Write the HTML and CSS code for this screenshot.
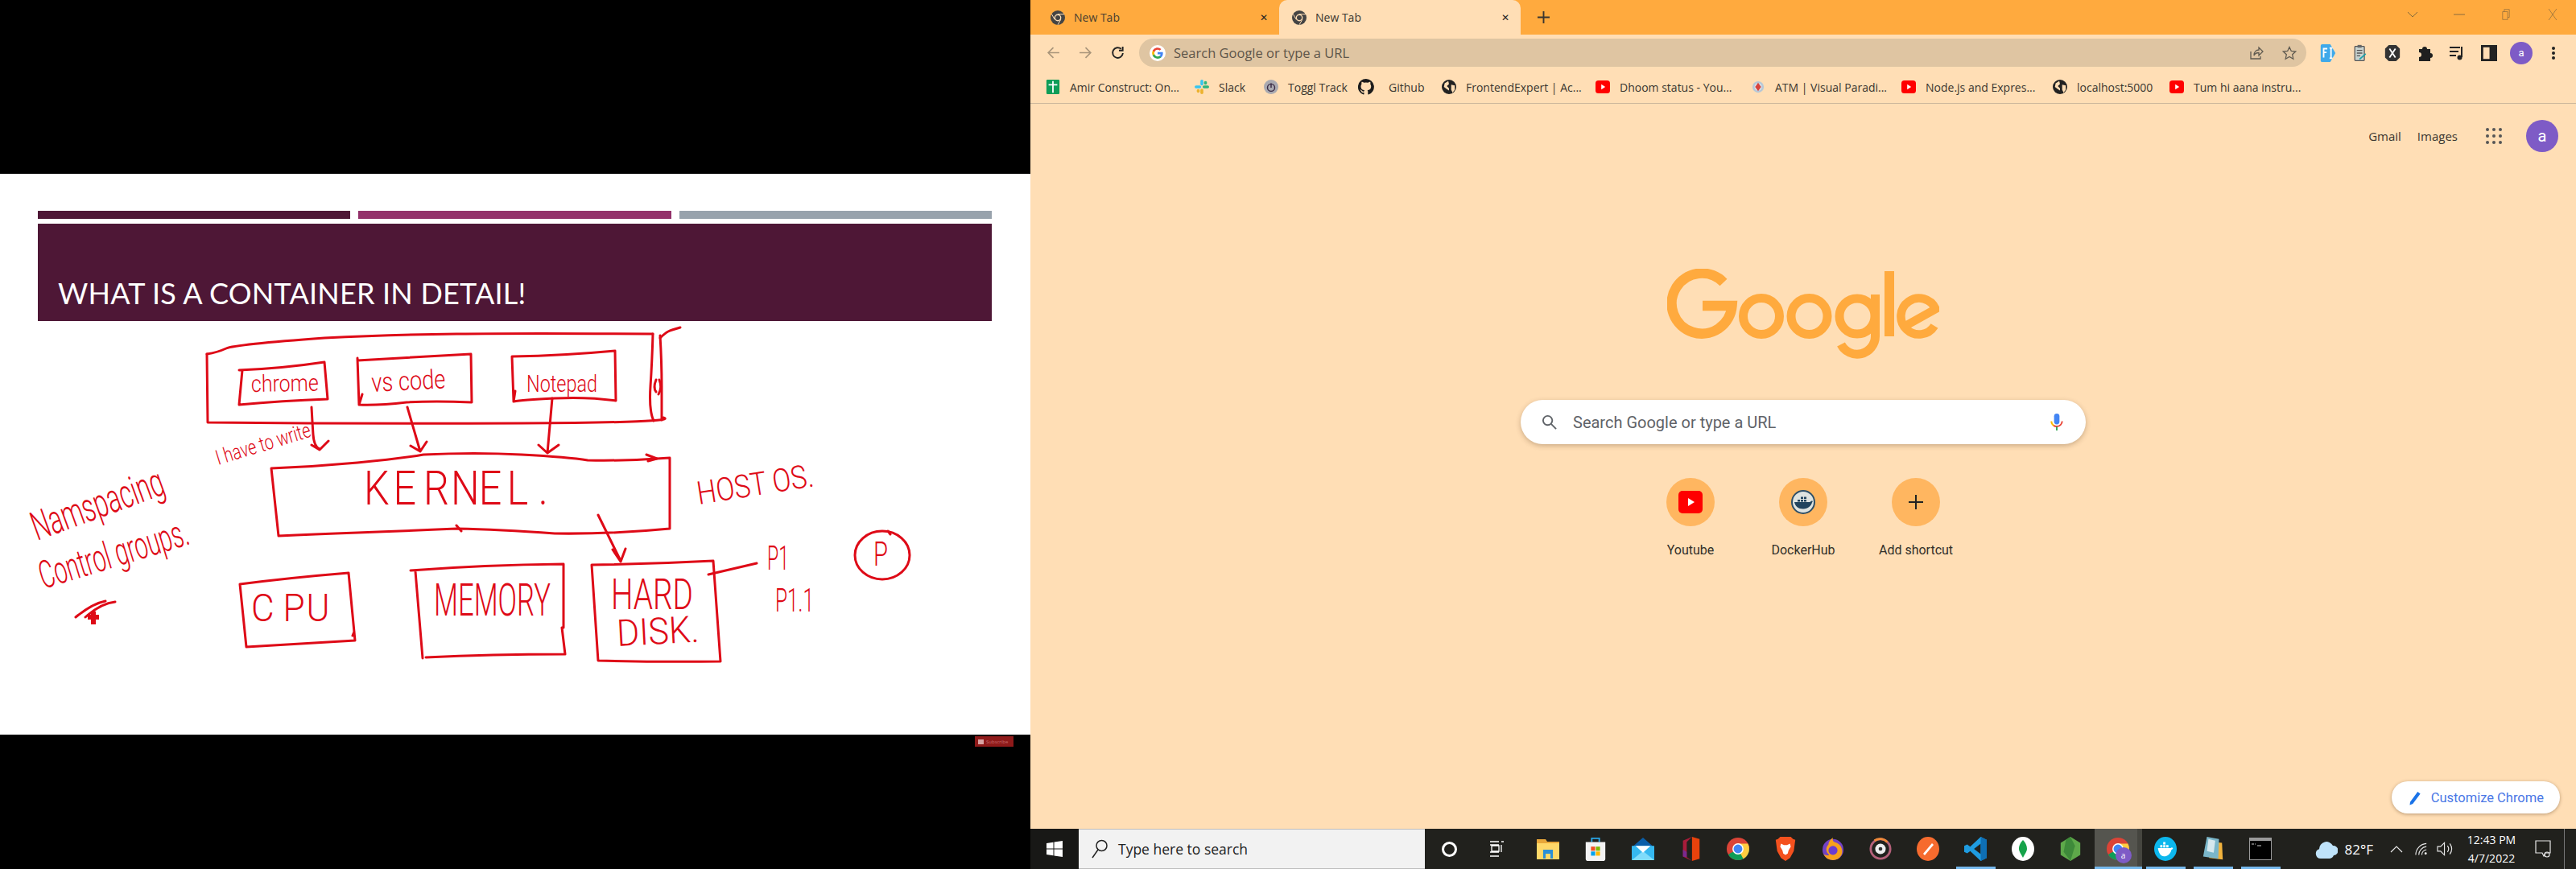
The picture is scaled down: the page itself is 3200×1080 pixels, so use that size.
FILE: index.html
```html
<!DOCTYPE html>
<html lang="en">
<head>
    <meta charset="UTF-8">
    <title>What is a container in detail - New Tab</title>
    <link rel="stylesheet" href="styles.css">
</head>
<body>
    <!-- shared icons -->
    <svg class="defs" width="0" height="0">
        <symbol id="chrome-mono" viewBox="0 0 18 18">
            <circle cx="9" cy="9" r="9" fill="#444"/>
            <circle cx="9" cy="9" r="4.4" fill="#ffdeb5"/>
            <circle cx="9" cy="9" r="3" fill="#444"/>
            <path d="M9 4.6h8M5.2 11.2 1.4 4.6M12.8 11.2 9 17.8" stroke="#ffdeb5" stroke-width="1"/>
        </symbol>
        <symbol id="yt" viewBox="0 0 20 20">
            <rect x="0" y="1" width="20" height="18" rx="4" fill="#f00"/>
            <path d="M8 6.5v7l5.5-3.5z" fill="#fff"/>
        </symbol>
        <symbol id="globe" viewBox="0 0 20 20">
            <circle cx="10" cy="10" r="10" fill="#222"/>
            <path d="M4 5l5-3 1 4-3 3 3 3v3l-3-2-4-3zM13 7l5 1 0 6-3 4-2-4z" fill="#ffdeb5"/>
        </symbol>
        <symbol id="chrome-color" viewBox="0 0 30 30">
            <circle cx="15" cy="15" r="15" fill="#db4437"/>
            <path d="M15 15 2 22.5A15 15 0 0 0 15 30z" fill="#0f9d58"/>
            <path d="M15 15h15A15 15 0 0 1 15 30z" fill="#0f9d58"/>
            <path d="M15 8h13.2A15 15 0 0 1 22 28L15 15z" fill="#ffcd40"/>
            <circle cx="15" cy="15" r="7.4" fill="#fff"/>
            <circle cx="15" cy="15" r="5.8" fill="#4285f4"/>
        </symbol>
    </svg>

    <div class="screen">
        <section class="video">
            <div class="slide">
                <div class="bars">
                    <span class="bar bar-dark"></span>
                    <span class="bar bar-pink"></span>
                    <span class="bar bar-grey"></span>
                </div>
                <h1 class="slide-title">WHAT IS A CONTAINER IN DETAIL!</h1>

                <!-- pen strokes drawn over the slide, coordinates are screen pixels -->
                <svg class="ink" viewBox="0 216 1280 697">
                    <g class="ink-lines">
                        <path d="M257 440Q270 438 281 433T403 420Q480 416 567 415T811 415"/>
                        <path d="M257 440 258 525Q450 527 648 526T824 519"/>
                        <path d="M811 415Q810 450 808 480T812 523"/>
                        <path d="M820 417Q822 450 822 480T822 522"/>
                        <path d="M820 420Q826 414 830 412T845 407"/>
                        <path d="M815 472Q811 482 815 487M819 472Q823 482 818 490"/>

                        <path d="M297 460Q350 458 403 450L407 496Q350 498 297 503M301 460 297 503"/>
                        <path d="M444 448Q510 444 585 440L586 500Q540 498 505 500 470 504 446 503L444 445M446 503 450 490"/>
                        <path d="M637 443Q700 442 764 436L765 498Q730 493 689 495T638 499L636 443M638 499 640 486"/>

                        <path d="M387 506Q388 525 389 540T397 558M387 553 397 559 408 548"/>
                        <path d="M506 506 522 561M510 554 522 561 530 549"/>
                        <path d="M686 495 680 563M669 553 680 563 694 553"/>

                        <path d="M337 582Q390 580 444 575T526 565Q590 562 648 565T730 572Q780 573 832 569L832 657Q760 664 689 663 620 658 567 657 500 660 444 662T346 666L337 582"/>
                        <path d="M803 565 816 570 805 573M567 653 573 660"/>

                        <path d="M743 640 771 697M761 683 771 698 777 682"/>

                        <path d="M298 726Q360 718 433 712L441 796Q370 800 306 804L298 726M440 785 438 790"/>
                        <path d="M510 709Q600 702 700 701L700 780M698 780 702 813Q610 813 529 817M516 710 525 818"/>
                        <path d="M735 702Q810 701 886 697L895 822Q820 823 743 821L735 702"/>
                        <path d="M880 714 940 700"/>

                        <ellipse cx="1096" cy="690" rx="34" ry="30"/>
                        <path d="M1103 660 1106 664"/>

                        <path d="M94 767Q115 750 131 747M106 767Q125 750 143 748"/>
                    </g>
                    <path class="ink-cursor" d="M113 760h6v4h4v6h-4v6h-6v-6h-4v-6h4z"/>

                    <g class="ink-text">
                        <text x="312" y="487" font-size="29" textLength="84" lengthAdjust="spacingAndGlyphs" transform="rotate(-1 312 487)">chrome</text>
                        <text x="462" y="487" font-size="33" textLength="92" lengthAdjust="spacingAndGlyphs" transform="rotate(-3 462 487)">vs code</text>
                        <text x="654" y="487" font-size="30" textLength="88" lengthAdjust="spacingAndGlyphs">Notepad</text>
                        <text x="271" y="578" font-size="26" textLength="122" lengthAdjust="spacingAndGlyphs" transform="rotate(-17 271 578)">I have to write</text>
                        <text transform="translate(452 627) scale(.85 1)" x="0 43 87 127 168 209 255" y="0" font-size="59">KERNEL.</text>
                        <text x="868" y="627" font-size="40" textLength="146" lengthAdjust="spacingAndGlyphs" transform="rotate(-9 868 627)">HOST OS.</text>
                        <text transform="translate(312 772) scale(.9 1)" x="0 44 76" y="0" font-size="49">CPU</text>
                        <text x="539" y="765" font-size="56" textLength="145" lengthAdjust="spacingAndGlyphs">MEMORY</text>
                        <text x="759" y="757" font-size="54" textLength="102" lengthAdjust="spacingAndGlyphs">HARD</text>
                        <text x="767" y="803" font-size="46" textLength="102" lengthAdjust="spacingAndGlyphs" transform="rotate(-3 767 803)">DISK.</text>
                        <text x="953" y="708" font-size="42" textLength="27" lengthAdjust="spacingAndGlyphs">P1</text>
                        <text x="963" y="760" font-size="40" textLength="48" lengthAdjust="spacingAndGlyphs">P1.1</text>
                        <text x="1085" y="703" font-size="42" textLength="18" lengthAdjust="spacingAndGlyphs">P</text>
                        <text x="46" y="672" font-size="50" textLength="172" lengthAdjust="spacingAndGlyphs" transform="rotate(-20 46 672)">Namspacing</text>
                        <text x="54" y="732" font-size="48" textLength="192" lengthAdjust="spacingAndGlyphs" transform="rotate(-17 54 732)">Control groups.</text>
                    </g>
                </svg>
            </div>
            <div class="video-foot">
                <div class="subscribe"><span class="subscribe-icon"></span><span class="subscribe-text">Subscribe</span></div>
            </div>
        </section>

        <section class="desktop">
            <div class="browser">
                <div class="tabstrip">
                    <div class="tab">
                        <svg class="tab-icon"><use href="#chrome-mono"/></svg>
                        <span class="tab-title">New Tab</span>
                        <span class="tab-close">✕</span>
                    </div>
                    <div class="tab tab-active">
                        <svg class="tab-icon"><use href="#chrome-mono"/></svg>
                        <span class="tab-title">New Tab</span>
                        <span class="tab-close">✕</span>
                    </div>
                    <svg class="new-tab" viewBox="0 0 16 16"><path d="M8 0v16M0 8h16"/></svg>
                    <div class="window-controls">
                        <span class="win-btn"><svg viewBox="0 0 14 8"><path d="M1 1l6 6 6-6"/></svg></span>
                        <span class="win-btn"><svg viewBox="0 0 14 14"><path d="M0 7h14"/></svg></span>
                        <span class="win-btn"><svg viewBox="0 0 14 20"><path d="M1 5h9v14H1zM4 5V1h9v14h-3"/></svg></span>
                        <span class="win-btn"><svg viewBox="0 0 14 20"><path d="M0 0l14 20M14 0 0 20"/></svg></span>
                    </div>
                </div>

                <div class="toolbar">
                    <span class="tool-btn"><svg class="nav-off" viewBox="0 0 16 16"><path d="M15 8H2M8 2 2 8l6 6"/></svg></span>
                    <span class="tool-btn"><svg class="nav-off" viewBox="0 0 16 16"><path d="M1 8h13M8 2l6 6-6 6"/></svg></span>
                    <span class="tool-btn"><svg class="nav-on" viewBox="0 0 16 16"><path d="M14 8.5A6 6 0 1 1 12 3.6M13.8 1v4.4H9.4"/></svg></span>
                    <div class="omnibox">
                        <span class="g-badge">
                            <svg viewBox="0 0 24 24">
                                <path fill="#4285f4" d="M22 12.2c0-.7-.1-1.4-.2-2H12v3.9h5.600a4.800 4.800 0 0 1-2.100 3.100v2.600h3.300C20.800 18 22 15.400 22 12.200z"/>
                                <path fill="#34a853" d="M12 22.400c2.800 0 5.200-.9 6.800-2.600l-3.300-2.600c-.9.600-2.100 1-3.500 1-2.700 0-5-1.800-5.800-4.300H2.800v2.700a10.400 10.400 0 0 0 9.200 5.800z"/>
                                <path fill="#fbbc05" d="M6.200 13.900a6.200 6.200 0 0 1 0-3.900V7.300H2.800a10.400 10.400 0 0 0 0 9.300z"/>
                                <path fill="#ea4335" d="M12 5.800c1.500 0 2.900.5 4 1.500l2.900-2.900A10.400 10.400 0 0 0 2.800 7.300L6.200 10c.8-2.500 3.100-4.200 5.800-4.200z"/>
                            </svg>
                        </span>
                        <span class="omni-text">Search Google or type a URL</span>
                        <svg class="omni-icon omni-share" viewBox="0 0 18 18"><path d="M2 7v9h12v-3M6 12c0-5 3-7 6-7V2l5 5-5 5V8.500c-3 0-5 1-6 3.500z"/></svg>
                        <svg class="omni-icon omni-star" viewBox="0 0 18 18"><path d="M9 1.500l2.300 5 5.400.6-4 3.700 1.100 5.400L9 13.500l-4.800 2.700 1.100-5.400-4-3.700 5.400-.6z"/></svg>
                    </div>
                    <span class="tool-btn tool-first">
                        <svg class="ext" viewBox="0 0 20 24"><path fill="#3fa9ea" d="M2 0h11l7 12-7 12H2a2 2 0 0 1-2-2V2a2 2 0 0 1 2-2z"/><path fill="none" stroke="#fff" stroke-width="2" d="M4 18V6h5M4 11h4M12 5h4M12 19h4M14 5v14"/></svg>
                    </span>
                    <span class="tool-btn">
                        <svg class="ext" viewBox="0 0 20 26"><rect x="2" y="3" width="14" height="21" rx="1" fill="#c9d3cf" stroke="#555" stroke-width="1.500"/><rect x="6" y="1" width="6" height="4" fill="#666"/><path d="M5 9h8M5 13h8M5 17h5" stroke="#555" stroke-width="1.500"/><path d="M9 22l9-8" stroke="#18a0a8" stroke-width="2"/></svg>
                    </span>
                    <span class="tool-btn">
                        <svg class="ext" viewBox="0 0 20 24"><path fill="#333" d="M5 1h10l5 5v12l-5 5H5l-5-5V6z"/><path stroke="#fff" stroke-width="2" d="M6 6l8 12M14 6 6 18"/></svg>
                    </span>
                    <span class="tool-btn">
                        <svg class="ext" viewBox="0 0 20 20"><path fill="#1f1f1f" d="M3 5h4a3 3 0 1 1 6 0h4v5a3 3 0 1 1 0 6v4H3v-5a3 3 0 1 0 0-6z"/></svg>
                    </span>
                    <span class="tool-btn">
                        <svg class="ext" viewBox="0 0 20 18"><path stroke="#222" stroke-width="2" fill="none" d="M1 2h13M1 7h11M1 12h8M16 1v13"/><circle cx="13.500" cy="14.500" r="3" fill="#222"/></svg>
                    </span>
                    <span class="tool-btn">
                        <svg class="ext" viewBox="0 0 18 18"><rect width="18" height="18" fill="#222"/><rect x="2.500" y="2.500" width="7" height="13" fill="#ffdeb5"/></svg>
                    </span>
                    <span class="tool-btn"><span class="avatar avatar-small">a</span></span>
                    <span class="tool-btn"><span class="kebab"></span></span>
                </div>

                <div class="bookmarks">
                    <a class="bm"><svg class="bm-icon" viewBox="0 0 18 20"><rect width="18" height="20" rx="1.500" fill="#0f9d58"/><path d="M9 2v16M3 7h12" stroke="#fff" stroke-width="2"/></svg><span>Amir Construct: On...</span></a>
                    <a class="bm"><svg class="bm-icon" viewBox="0 0 20 20"><rect x="8" y="0" width="4" height="8" rx="2" fill="#36c5f0"/><rect x="0" y="8" width="9" height="4" rx="2" fill="#36c5f0"/><rect x="11" y="8" width="9" height="4" rx="2" fill="#2eb67d"/><rect x="8" y="12.500" width="4" height="7.500" rx="2" fill="#ecb22e"/><rect x="3" y="13" width="4" height="5" rx="2" fill="#ecb22e"/><rect x="13" y="2" width="4" height="5" rx="2" fill="#2eb67d"/></svg><span>Slack</span></a>
                    <a class="bm"><svg class="bm-icon" viewBox="0 0 20 20"><circle cx="10" cy="10" r="10" fill="#a9a9b0"/><circle cx="10" cy="11" r="5" fill="none" stroke="#3a2a44" stroke-width="1.600"/><path d="M10 5v6" stroke="#3a2a44" stroke-width="1.600"/></svg><span>Toggl Track</span></a>
                    <a class="bm"><svg class="bm-icon bm-icon-big" viewBox="0 0 20 20"><path fill="#1c1c1c" d="M10 0a10 10 0 0 0-3.200 19.500c.500.100.700-.200.700-.500v-2c-2.800.600-3.400-1.300-3.400-1.300-.500-1.200-1.100-1.500-1.100-1.500-.900-.600.100-.600.100-.600 1 .100 1.500 1 1.500 1 .900 1.500 2.300 1.100 2.900.800.100-.600.300-1.100.600-1.300-2.200-.300-4.600-1.100-4.600-4.900 0-1.100.400-2 1-2.700-.100-.300-.400-1.300.100-2.700 0 0 .800-.300 2.800 1a9.600 9.600 0 0 1 5 0c1.900-1.300 2.700-1 2.700-1 .600 1.400.200 2.400.100 2.700.600.700 1 1.600 1 2.700 0 3.800-2.300 4.600-4.600 4.900.400.300.700.900.700 1.900V19c0 .300.200.600.700.500A10 10 0 0 0 10 0z"/></svg><span>Github</span></a>
                    <a class="bm"><svg class="bm-icon"><use href="#globe"/></svg><span>FrontendExpert | Ac...</span></a>
                    <a class="bm"><svg class="bm-icon"><use href="#yt"/></svg><span>Dhoom status - You...</span></a>
                    <a class="bm"><svg class="bm-icon" viewBox="0 0 20 24"><circle cx="10" cy="12" r="9.500" fill="#b8c8d6"/><circle cx="10" cy="12" r="6" fill="#dfe8ee"/><path d="M10 5l5 7-5 7-5-7z" fill="#d8433c"/></svg><span>ATM | Visual Paradi...</span></a>
                    <a class="bm"><svg class="bm-icon"><use href="#yt"/></svg><span>Node.js and Expres...</span></a>
                    <a class="bm"><svg class="bm-icon"><use href="#globe"/></svg><span>localhost:5000</span></a>
                    <a class="bm"><svg class="bm-icon"><use href="#yt"/></svg><span>Tum hi aana instru...</span></a>
                </div>

                <main class="ntp">
                    <div class="top-links">
                        <a class="top-link">Gmail</a>
                        <a class="top-link">Images</a>
                        <span class="apps"><i></i><i></i><i></i><i></i><i></i><i></i><i></i><i></i><i></i></span>
                        <span class="avatar avatar-big">a</span>
                    </div>

                    <svg class="logo" viewBox="0 0 338 112" role="img" aria-label="Google">
                        <path stroke-width="12.500" d="M70 17A37.500 37.500 0 1 0 80.500 46H44"/>
                        <circle cx="117" cy="59" r="22.500" stroke-width="11"/>
                        <circle cx="176.500" cy="59" r="22.500" stroke-width="11"/>
                        <circle cx="236" cy="59" r="22" stroke-width="11"/>
                        <path stroke-width="11" d="M258.500 32V84A22.500 22.500 0 0 1 216 94"/>
                        <path stroke-width="12" d="M276 3V84"/>
                        <path stroke-width="10.500" d="M296 71 333.500 50A22.500 22.500 0 1 0 332 71"/>
                    </svg>

                    <div class="searchbox">
                        <svg class="search-glass" viewBox="0 0 20 20"><circle cx="8" cy="8" r="6"/><path d="M12.500 12.500 19 19"/></svg>
                        <span class="search-text">Search Google or type a URL</span>
                        <svg class="mic" viewBox="0 0 16 24">
                            <rect x="4.500" y="1" width="7" height="14" rx="3.500" fill="#4285f4"/>
                            <path d="M1 11a7 7 0 0 0 3.500 6" stroke="#fbbc05" stroke-width="2" fill="none"/>
                            <path d="M4 16.600a7 7 0 0 0 4 1.100 7 7 0 0 0 7-6.700" stroke="#ea4335" stroke-width="2" fill="none"/>
                            <path d="M8 18v5" stroke="#34a853" stroke-width="2"/>
                        </svg>
                    </div>

                    <div class="shortcuts">
                        <div class="shortcut">
                            <span class="shortcut-icon"><svg class="yt-big" viewBox="0 0 30 28"><rect width="30" height="28" rx="5" fill="#f00"/><path d="M12 9v10l8-5z" fill="#fff"/></svg></span>
                            <span class="shortcut-label">Youtube</span>
                        </div>
                        <div class="shortcut">
                            <span class="shortcut-icon">
                                <svg class="docker-big" viewBox="0 0 30 30">
                                    <circle cx="15" cy="15" r="14" fill="#dfe3e0" stroke="#2e4f68" stroke-width="2"/>
                                    <path fill="#22445e" d="M4 15h19c1 0 2-2 3-1.500 1 .300 1 1 0 2-1 4-5 8-11 8S5 20 4 15z"/>
                                    <path fill="#22445e" d="M8 12h3v2.500H8zM12 12h3v2.500h-3zM16 12h3v2.500h-3zM12 8.500h3V11h-3zM16 8.500h3V11h-3z"/>
                                </svg>
                            </span>
                            <span class="shortcut-label">DockerHub</span>
                        </div>
                        <div class="shortcut">
                            <span class="shortcut-icon"><svg class="plus-big" viewBox="0 0 18 18"><path d="M9 0v18M0 9h18"/></svg></span>
                            <span class="shortcut-label">Add shortcut</span>
                        </div>
                    </div>

                    <button class="customize">
                        <svg class="pencil" viewBox="0 0 16 20"><path d="M1 15.500 11 2l3.500 2.600-10 13.500-4 1.600z"/></svg>
                        Customize Chrome
                    </button>
                </main>
            </div>

            <footer class="taskbar">
                <div class="start">
                    <svg viewBox="0 0 20 20"><path fill="#fff" d="M0 3l8.500-1.200v7.700H0zM9.500 1.600 20 0v9.500H9.500zM0 10.500h8.500v7.700L0 17zM9.500 10.500H20V20L9.500 18.400z"/></svg>
                </div>
                <div class="task-search">
                    <svg viewBox="0 0 20 24"><circle cx="12.500" cy="8" r="6.500"/><path d="M8 13 1 23"/></svg>
                    <span>Type here to search</span>
                </div>
                <div class="tile tile-sys"><span class="cortana"></span></div>
                <div class="tile tile-sys">
                    <svg class="sys-view" viewBox="0 0 20 20"><path d="M1 1h11M15 1h3M1 5h11M15 5v9M1 14h11M1 19h11M3 6v7h9V6z"/></svg>
                </div>

                <div class="pinned">
                    <div class="tile"><svg viewBox="0 0 28 28"><path fill="#e8a73a" d="M0 2h11l2 3h15v20H0z"/><path fill="#ffd869" d="M0 7h28v20H0z"/><path fill="#2a8fd6" d="M8 26V15h12v11h-3v-6h-6v6z"/></svg></div>
                    <div class="tile"><svg viewBox="0 0 28 32"><path d="M9 7V2h10v5" fill="none" stroke="#29a6e6" stroke-width="2"/><path fill="#f3f3f3" d="M1 7h26v22a3 3 0 0 1-3 3H4a3 3 0 0 1-3-3z"/><rect x="8" y="13" width="5.500" height="5.500" fill="#f25022"/><rect x="14.500" y="13" width="5.500" height="5.500" fill="#7fba00"/><rect x="8" y="19.500" width="5.500" height="5.500" fill="#00a4ef"/><rect x="14.500" y="19.500" width="5.500" height="5.500" fill="#ffb900"/></svg></div>
                    <div class="tile"><svg viewBox="0 0 30 30"><path fill="#0a5ea8" d="M15 0 30 13H0z"/><path fill="#35b8f0" d="M0 11h30v19H0z"/><path fill="#7fdcfb" d="M0 30 15 18l15 12z"/><path fill="#fff" d="M5 11h20l-10 9z"/></svg></div>
                    <div class="tile"><svg viewBox="0 0 24 32"><path fill="#e8420c" d="M14 0 24 3v26l-10 3z"/><path fill="#a81c3a" d="M14 0 2 5v21l12 6-7-5V7z"/><path fill="#7b2a8e" d="M2 17l5 3v7l-5-1z"/></svg></div>
                    <div class="tile"><svg class="chrome-tile"><use href="#chrome-color"/></svg></div>
                    <div class="tile"><svg viewBox="0 0 26 32"><path fill="#f4511e" d="M6 0h14l3 3 3 1-2 15-5 9-6 4-6-4-5-9L0 4l3-1z"/><path fill="#fff" d="M7 9l4 2h4l4-2 1 4-3 5-1 4-3 2-3-2-1-4-3-5z"/></svg></div>
                    <div class="tile"><svg viewBox="0 0 30 32"><circle cx="15" cy="17" r="14" fill="#7342c4"/><path fill="#f7a11b" d="M15 31a14 14 0 0 1-13-9c2 3 6 3 8 2-5-4-5-10-1-14 0-3 2-6 6-9-1 3 0 5 2 6 4 1 7 4 7 4 3 3 5 10 1 15-2 3-6 5-10 5z"/><circle cx="15" cy="18" r="6" fill="#6a3bd2"/></svg></div>
                    <div class="tile"><svg viewBox="0 0 30 32"><circle cx="15" cy="16" r="13" fill="none" stroke="#b5617a" stroke-width="3"/><path d="M7 5a13 13 0 0 1 17 2" fill="none" stroke="#f08a3a" stroke-width="3"/><circle cx="15" cy="16" r="7" fill="#eee"/><circle cx="15" cy="16" r="2.500" fill="#333"/></svg></div>
                    <div class="tile"><svg viewBox="0 0 28 30"><ellipse cx="14" cy="15" rx="14" ry="15" fill="#f66b2e"/><path d="M8 21 19 8l2 2-11 13z" fill="#fff"/></svg></div>
                    <div class="tile tile-open tile-code"><svg viewBox="0 0 30 32"><path fill="#1f9ce0" d="M22 0l8 4v24l-8 4L8 19l-4 3-4-2V12l4-2 4 3zM22 9 13 16l9 7z"/><path fill="#0e6fb5" d="M22 0l8 4v24l-8 4z"/></svg></div>
                    <div class="tile"><svg viewBox="0 0 28 30"><ellipse cx="14" cy="15" rx="14" ry="15" fill="#fff"/><path fill="#16a34a" d="M14 4c4 4 5 8 5 11s-3 7-5 11c-2-4-5-8-5-11s1-7 5-11z"/></svg></div>
                    <div class="tile"><svg viewBox="0 0 26 32"><path fill="#5ea94a" d="M13 0l13 8v16l-13 8L0 24V8z"/><path fill="#3e8a3a" d="M13 0 7 4 4 20l9 12 6-20z"/></svg></div>
                    <div class="tile tile-active">
                        <svg class="chrome-tile"><use href="#chrome-color"/></svg>
                        <span class="tile-badge">a</span>
                    </div>
                    <div class="tile tile-open"><svg viewBox="0 0 30 32"><ellipse cx="15" cy="16" rx="15" ry="16" fill="#0db7ed"/><path fill="#fff" d="M5 15h17c1-1 2-1 3 0 0 1-1 2-2 2-1 5-5 9-10 9-4 0-7-4-8-11zM8 11h3v3H8zM12 11h3v3h-3zM16 11h3v3h-3zM12 7h3v3h-3z"/></svg></div>
                    <div class="tile tile-open"><svg viewBox="0 0 28 32"><path fill="#f2b33d" d="M8 6l18 2 1 22-18-2z"/><path fill="#7ab6c9" d="M6 0l16 3-1 26-20-3z"/><path fill="#d5e8ee" d="M8 3l9 2-2 16-9-2z"/></svg></div>
                    <div class="tile tile-open"><svg viewBox="0 0 28 28"><rect width="28" height="28" fill="#9a9a9a"/><rect y="4" x="1" width="26" height="23" fill="#000"/><path d="M3 8h3M7 8h1M10 10h5" stroke="#ccc"/></svg></div>
                </div>

                <div class="tray">
                    <svg class="tray-cloud" viewBox="0 0 28 28"><path fill="#bfe3fa" d="M7 26a6 6 0 0 1-2-11.700A9 9 0 0 1 22 10a6 6 0 0 1 1 12 6 6 0 0 1-5 4z"/></svg>
                    <span class="tray-temp">82°F</span>
                    <svg class="tray-caret" viewBox="0 0 16 9"><path d="M1 8l7-7 7 7"/></svg>
                    <svg class="tray-wifi" viewBox="0 0 18 18"><path d="M1 17A15 15 0 0 1 15 2M5 17A11 11 0 0 1 15 6M9 17a7 7 0 0 1 6-7"/><circle cx="14" cy="15" r="1.500" fill="#fff" stroke="none"/></svg>
                    <svg class="tray-sound" viewBox="0 0 22 20"><path d="M1 7h4l5-5v16l-5-5H1zM14 6q3 4 0 8M17 3q5 7 0 14"/></svg>
                    <div class="clock"><span>12:43 PM</span><span>4/7/2022</span></div>
                    <svg class="tray-note" viewBox="0 0 20 22"><path d="M1 1h18v15h-6l-2 4-2-4H1z"/><circle cx="15" cy="18" r="3"/></svg>
                    <span class="show-desktop"></span>
                </div>
            </footer>
        </section>
    </div>
</body>
</html>
```

FILE: styles.css
```css
html, body {
    margin: 0;
    padding: 0;
}
body {
    width: 3200px;
    height: 1080px;
    overflow: hidden;
    background-color: #000;
    font-family: "Open Sans", "Liberation Sans", sans-serif;
}
.defs {
    position: absolute;
}
.screen {
    display: flex;
    width: 3200px;
    height: 1080px;
}

/* left half: the lecture video */
.video {
    width: 1280px;
    flex: none;
    padding-top: 216px;
    box-sizing: border-box;
    background-color: #000;
}
.slide {
    position: relative;
    height: 697px;
    padding: 46px 48px 0 47px;
    box-sizing: border-box;
    background-color: #fff;
}
.bars {
    display: flex;
    gap: 10px;
}
.bar {
    flex: 1;
    height: 10px;
}
.bar-dark {
    background-color: #4e1736;
}
.bar-pink {
    background-color: #93316a;
}
.bar-grey {
    background-color: #98a2ac;
}
.slide-title {
    display: flex;
    align-items: flex-end;
    height: 121px;
    margin: 6px 0 0;
    padding: 0 0 13px 25px;
    box-sizing: border-box;
    background-color: #4e1736;
    color: #fff;
    font-family: Lato, "Open Sans", sans-serif;
    font-size: 36px;
    font-weight: 400;
    letter-spacing: 0.2px;
    white-space: nowrap;
}
.ink {
    position: absolute;
    top: 0;
    left: 0;
    width: 1280px;
    height: 697px;
}
.ink-lines path, .ink-lines ellipse {
    fill: none;
    stroke: #de0a17;
    stroke-width: 3;
    stroke-linecap: round;
    stroke-linejoin: round;
}
.ink-cursor {
    fill: #de0a17;
}
.ink-text text {
    fill: #de0a17;
    font-family: Roboto, "Liberation Sans", sans-serif;
    font-weight: 300;
}
.video-foot {
    display: flex;
    justify-content: flex-end;
    padding: 2px 21px 0 0;
}
.subscribe {
    display: flex;
    align-items: center;
    gap: 3px;
    width: 48px;
    height: 13px;
    padding-left: 4px;
    box-sizing: border-box;
    background-color: #8f1a1a;
}
.subscribe-icon {
    width: 7px;
    height: 6px;
    background-color: #d9a3a3;
}
.subscribe-text {
    color: #c46a6a;
    font-size: 6px;
    white-space: nowrap;
}

/* right half: browser and taskbar */
.desktop {
    display: flex;
    flex-direction: column;
    width: 1920px;
    flex: none;
    background-color: #ffdeb5;
}
.browser {
    flex: 1;
    display: flex;
    flex-direction: column;
    min-height: 0;
    color: #3a3630;
}
.tabstrip {
    display: flex;
    align-items: flex-end;
    height: 43px;
    flex: none;
    padding-left: 9px;
    background-color: #ffaa3e;
}
.tab {
    display: flex;
    align-items: center;
    gap: 11px;
    width: 300px;
    height: 43px;
    padding: 0 14px 0 16px;
    box-sizing: border-box;
    font-size: 14px;
    color: #4a4030;
}
.tab-active {
    background-color: #ffdeb5;
    border-radius: 10px 10px 0 0;
    color: #3a3630;
}
.tab-icon {
    width: 18px;
    height: 18px;
    flex: none;
}
.tab-title {
    flex: 1;
}
.tab-close {
    font-size: 12px;
    color: #222;
}
.new-tab {
    width: 15px;
    height: 15px;
    margin: 0 0 14px 21px;
    fill: none;
    stroke: #3a3630;
    stroke-width: 2;
}
.window-controls {
    display: flex;
    margin-left: auto;
    align-self: flex-start;
}
.win-btn {
    display: flex;
    align-items: center;
    justify-content: center;
    width: 58px;
    height: 36px;
}
.win-btn svg {
    width: 14px;
    height: 14px;
    fill: none;
    stroke: #8a6a3c;
    stroke-width: 1;
}
.toolbar {
    display: flex;
    align-items: flex-start;
    height: 47px;
    flex: none;
    padding: 5px 8px 0;
    box-sizing: border-box;
}
.tool-btn {
    display: flex;
    align-items: center;
    justify-content: center;
    width: 40px;
    height: 35px;
    flex: none;
}
.nav-off, .nav-on {
    width: 17px;
    height: 17px;
    fill: none;
    stroke-width: 1.5;
}
.nav-off {
    stroke: #a8947a;
}
.nav-on {
    stroke: #222;
    stroke-width: 1.8;
}
.omnibox {
    flex: 1;
    display: flex;
    align-items: center;
    height: 35px;
    margin-left: 7px;
    padding: 0 12px 0 13px;
    box-sizing: border-box;
    border-radius: 18px;
    background-color: #dfc5a2;
    font-size: 16.5px;
}
.tool-first {
    margin-left: 7px;
}
.g-badge {
    display: flex;
    align-items: center;
    justify-content: center;
    width: 20px;
    height: 20px;
    border-radius: 50%;
    background-color: #fff;
}
.g-badge svg {
    width: 16px;
    height: 16px;
}
.omni-text {
    flex: 1;
    margin-left: 10px;
    color: #5e564a;
}
.omni-icon {
    width: 18px;
    height: 18px;
    fill: none;
    stroke: #5f5a50;
    stroke-width: 1.3;
}
.omni-star {
    margin-left: 23px;
}
.ext {
    width: 20px;
    height: 22px;
}
.avatar {
    display: flex;
    align-items: center;
    justify-content: center;
    border-radius: 50%;
    background-color: #7e5bc6;
    color: #fff;
    font-family: Roboto, sans-serif;
}
.avatar-small {
    width: 28px;
    height: 28px;
    font-size: 13px;
}
.avatar-big {
    width: 40px;
    height: 40px;
    font-size: 20px;
}
.kebab {
    width: 4px;
    height: 4px;
    border-radius: 50%;
    background-color: #222;
    box-shadow: 0 -6px 0 #222, 0 6px 0 #222;
}
.bookmarks {
    display: grid;
    grid-template-columns: 185px 86px 117px 104px 191px 193px 187px 188px 145px auto;
    align-items: center;
    height: 39px;
    flex: none;
    padding: 0 0 2px 19px;
    box-sizing: border-box;
    border-bottom: 1px solid #cdb89c;
    font-size: 14px;
}
.bm {
    display: flex;
    align-items: center;
    gap: 12px;
    white-space: nowrap;
}
.bm-icon {
    width: 18px;
    height: 18px;
    flex: none;
}
.bm-icon-big {
    width: 20px;
    height: 20px;
    margin-right: 6px;
}

/* new tab page */
.ntp {
    flex: 1;
    display: flex;
    flex-direction: column;
    align-items: center;
    min-height: 0;
}
.top-links {
    display: flex;
    align-items: center;
    align-self: flex-end;
    height: 40px;
    margin: 20px 22px 0 0;
    font-size: 15px;
}
.top-link {
    margin-right: 20px;
}
.apps {
    display: grid;
    grid-template-columns: repeat(3, 4px);
    gap: 4px;
    margin: 0 30px 0 15px;
}
.apps i {
    width: 4px;
    height: 4px;
    border-radius: 50%;
    background-color: #555;
}
.logo {
    width: 338px;
    height: 112px;
    margin-top: 145px;
    fill: none;
    stroke: #ffaa3e;
}
.searchbox {
    display: flex;
    align-items: center;
    width: 702px;
    height: 55px;
    margin-top: 51px;
    padding: 0 28px 0 26px;
    box-sizing: border-box;
    border-radius: 28px;
    background-color: #fff;
    box-shadow: 0 2px 6px rgba(80, 50, 20, 0.3);
    font-family: Roboto, sans-serif;
    font-size: 20px;
    color: #5f6368;
}
.search-glass {
    width: 19px;
    height: 19px;
    flex: none;
    fill: none;
    stroke: #5f6368;
    stroke-width: 2;
}
.search-text {
    flex: 1;
    margin-left: 20px;
}
.mic {
    width: 16px;
    height: 23px;
}
.shortcuts {
    display: flex;
    margin-top: 42px;
}
.shortcut {
    display: flex;
    flex-direction: column;
    align-items: center;
    width: 140px;
    font-family: Roboto, sans-serif;
    font-size: 16px;
    color: #33302a;
}
.shortcut-icon {
    display: flex;
    align-items: center;
    justify-content: center;
    width: 60px;
    height: 60px;
    border-radius: 50%;
    background-color: #ffb660;
}
.shortcut-label {
    margin-top: 20px;
}
.yt-big {
    width: 30px;
    height: 28px;
}
.docker-big {
    width: 30px;
    height: 30px;
}
.plus-big {
    width: 18px;
    height: 18px;
    fill: none;
    stroke: #222;
    stroke-width: 2;
}
.customize {
    display: flex;
    align-items: center;
    gap: 12px;
    align-self: flex-end;
    height: 40px;
    margin: auto 20px 19px 0;
    padding: 0 20px 0 22px;
    border: none;
    border-radius: 20px;
    background-color: #fff;
    box-shadow: 0 1px 4px rgba(80, 50, 20, 0.4);
    font-family: Roboto, sans-serif;
    font-size: 16.5px;
    color: #4a78e6;
}
.pencil {
    width: 15px;
    height: 19px;
    fill: #1a73e8;
}

/* windows taskbar */
.taskbar {
    display: flex;
    height: 50px;
    flex: none;
    background-color: #21211d;
    color: #fff;
}
.start {
    display: flex;
    align-items: center;
    justify-content: center;
    width: 60px;
    flex: none;
    background-color: #181816;
}
.start svg {
    width: 20px;
    height: 20px;
}
.task-search {
    display: flex;
    align-items: center;
    gap: 12px;
    width: 430px;
    flex: none;
    padding-left: 15px;
    box-sizing: border-box;
    border-top: 1px solid #bdbdbd;
    border-bottom: 1px solid #bdbdbd;
    background-color: #f2f2f2;
    font-size: 17.5px;
    color: #222;
}
.task-search svg {
    width: 22px;
    height: 24px;
    fill: none;
    stroke: #222;
    stroke-width: 1.5;
}
.tile {
    position: relative;
    display: flex;
    align-items: center;
    justify-content: center;
    width: 59px;
    height: 50px;
    flex: none;
}
.tile svg {
    width: 28px;
    height: 30px;
}
.tile-sys {
    width: 60px;
}
.cortana {
    width: 13px;
    height: 13px;
    border: 3px solid #fff;
    border-radius: 50%;
}
.tile-sys .sys-view {
    width: 20px;
    height: 20px;
    fill: none;
    stroke: #fff;
    stroke-width: 1.3;
}
.pinned {
    display: flex;
    margin-left: 3.5px;
}
.tile-open::after, .tile-active::after {
    content: "";
    position: absolute;
    left: 5px;
    right: 5px;
    bottom: 0;
    height: 3px;
    background-color: #76b9ed;
}
.tile-active {
    background: linear-gradient(to right, #55554f 53px, #45453f 53px);
}
.tile-active::after {
    left: 0;
    right: 0;
}
.tile .chrome-tile {
    width: 28px;
    height: 30px;
}
.tile-badge {
    position: absolute;
    top: 23px;
    left: 26px;
    width: 20px;
    height: 20px;
    border-radius: 50%;
    background-color: #7e5bc6;
    font-size: 10px;
    line-height: 20px;
    text-align: center;
}
.tray {
    flex: 1;
    display: flex;
    align-items: center;
    padding-left: 38px;
    font-size: 16px;
}
.tray svg {
    flex: none;
}
.tray-cloud {
    width: 28px;
    height: 28px;
}
.tray-temp {
    margin-left: 9px;
    font-size: 17px;
}
.tray-caret, .tray-wifi, .tray-sound, .tray-note {
    fill: none;
    stroke: #e8e8e8;
    stroke-width: 1.2;
}
.tray-caret {
    width: 16px;
    height: 9px;
    margin-left: 21px;
}
.tray-wifi {
    width: 17px;
    height: 18px;
    margin-left: 15px;
}
.tray-sound {
    width: 21px;
    height: 20px;
    margin-left: 10px;
}
.clock {
    display: flex;
    flex-direction: column;
    align-items: center;
    gap: 4px;
    width: 68px;
    margin-left: 13px;
    font-size: 14px;
    line-height: 19px;
    white-space: nowrap;
}
.tray-note {
    width: 20px;
    height: 22px;
    margin-left: 20px;
}
.show-desktop {
    width: 1px;
    height: 50px;
    margin-left: 16px;
    background-color: #777;
}
```
